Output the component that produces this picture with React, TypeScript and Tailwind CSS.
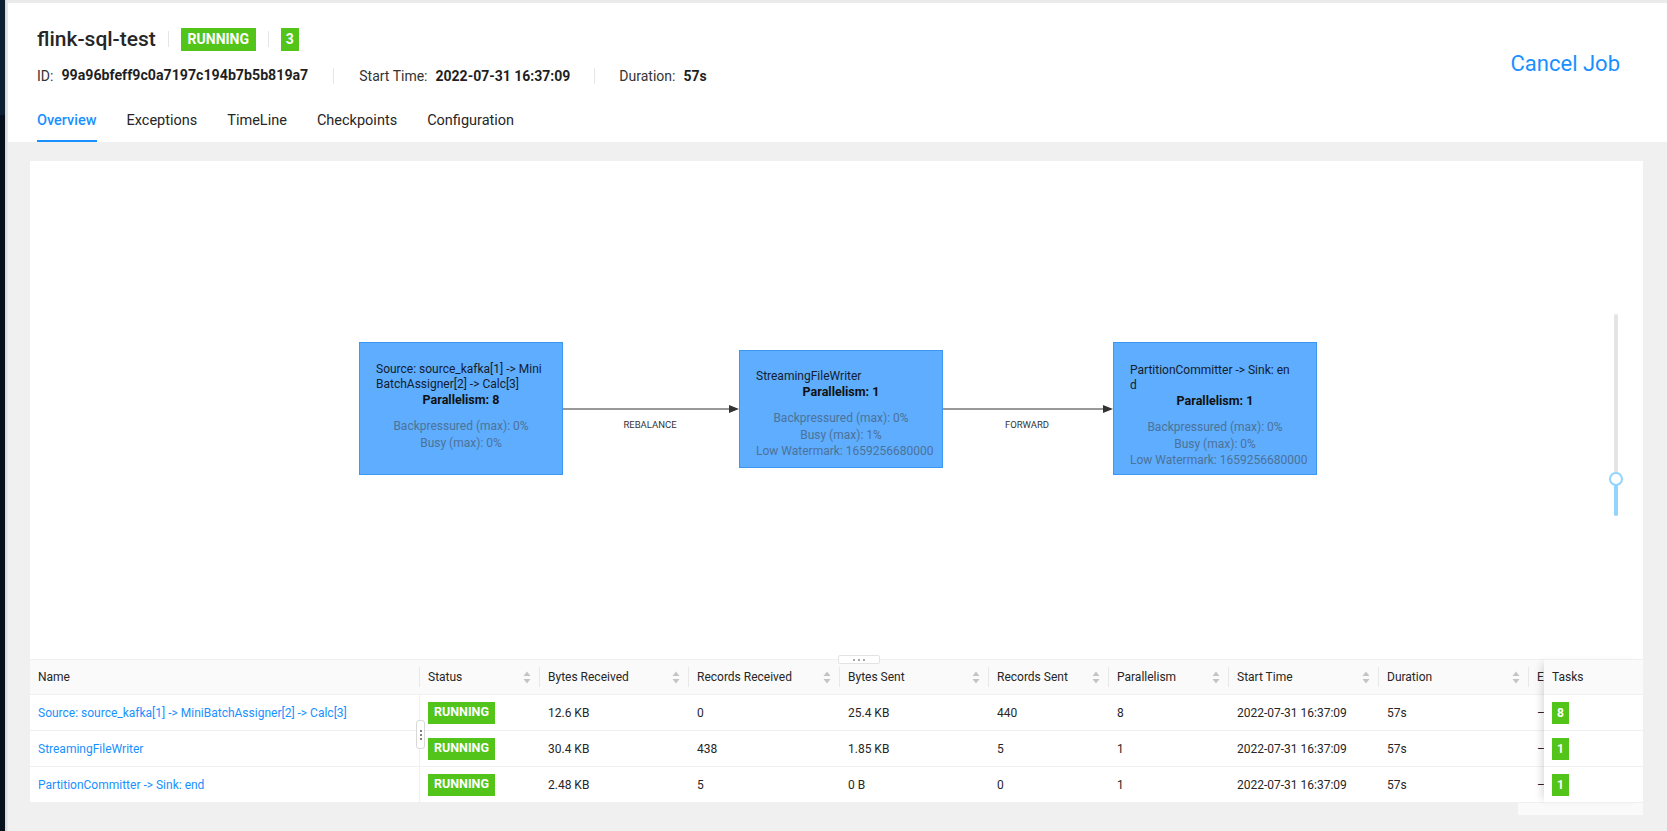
import type { ReactNode } from 'react'

const ROWS = [
  {
    name: 'Source: source_kafka[1] -> MiniBatchAssigner[2] -> Calc[3]',
    bytesIn: '12.6 KB',
    recIn: '0',
    bytesOut: '25.4 KB',
    recOut: '440',
    parallelism: '8',
    tasks: '8',
  },
  {
    name: 'StreamingFileWriter',
    bytesIn: '30.4 KB',
    recIn: '438',
    bytesOut: '1.85 KB',
    recOut: '5',
    parallelism: '1',
    tasks: '1',
  },
  {
    name: 'PartitionCommitter -> Sink: end',
    bytesIn: '2.48 KB',
    recIn: '5',
    bytesOut: '0 B',
    recOut: '0',
    parallelism: '1',
    tasks: '1',
  },
]

const HEADERS = [
  { label: 'Name', sort: false },
  { label: 'Status', sort: true },
  { label: 'Bytes Received', sort: true },
  { label: 'Records Received', sort: true },
  { label: 'Bytes Sent', sort: true },
  { label: 'Records Sent', sort: true },
  { label: 'Parallelism', sort: true },
  { label: 'Start Time', sort: true },
  { label: 'Duration', sort: true },
  { label: 'End Time', sort: true },
]

const GRID = 'grid grid-cols-[390px_120px_149px_151px_149px_120px_120px_150px_150px_150px]'

function SortIcon() {
  return (
    <svg width="8" height="13" viewBox="0 0 8 13" className="shrink-0">
      <path d="M4 0.5L7.5 5H0.5Z" fill="#c4c4c4" />
      <path d="M4 12.5L0.5 8H7.5Z" fill="#c4c4c4" />
    </svg>
  )
}

function Sep({ className = 'mx-[12px]' }: { className?: string }) {
  return <span className={`block h-[16px] w-px shrink-0 bg-[#e6e6e6] ${className}`} />
}

function GraphNode({
  left,
  top,
  height,
  pt,
  name,
  parallelism,
  details,
}: {
  left: string
  top: string
  height: string
  pt: string
  name: string[]
  parallelism: string
  details: string[]
}) {
  return (
    <div
      className={`absolute w-[204px] border border-[#3a97f2] bg-[#5eadfe] px-[16px] ${left} ${top} ${height} ${pt}`}
    >
      <div className="text-[12px] leading-[15px] text-[#14202e]">
        {name.map((l) => (
          <div key={l} className="whitespace-nowrap">
            {l}
          </div>
        ))}
      </div>
      <div className="text-center text-[12.5px] font-bold leading-[16px] text-[#111]">
        Parallelism: {parallelism}
      </div>
      <div className="mt-[10px] text-center text-[12px] leading-[16.5px] text-[#4d7299]">
        {details.map((d) => (
          <div key={d} className="whitespace-nowrap">
            {d}
          </div>
        ))}
      </div>
    </div>
  )
}

function Edge({ x1, x2, y, label, lx }: { x1: number; x2: number; y: number; label: string; lx: number }) {
  return (
    <g>
      <line x1={x1} y1={y} x2={x2 - 9} y2={y} stroke="#333" strokeWidth="1" />
      <path d={`M${x2} ${y}L${x2 - 10} ${y - 4}L${x2 - 10} ${y + 4}Z`} fill="#333" />
      <text
        x={lx}
        y={y + 19}
        textAnchor="middle"
        fontSize="9.5"
        fill="#333"
        style={{ fontFamily: 'Roboto, sans-serif' }}
      >
        {label}
      </text>
    </g>
  )
}

function Badge({ children, className }: { children: ReactNode; className: string }) {
  return (
    <span className={`flex items-center justify-center bg-[#52c41a] font-bold text-white ${className}`}>
      {children}
    </span>
  )
}

export default function App() {
  return (
    <div className="flex h-[831px] w-full overflow-hidden bg-[#f0f0f0] text-[#262626] [font-family:Roboto,'Liberation_Sans',sans-serif]">
      {/* side nav edge */}
      <div className="flex w-[5px] shrink-0 flex-col">
        <div className="h-[115px] bg-[#0d1f33]" />
        <div className="flex-1 bg-[#06111d]" />
      </div>
      <div className="w-[3px] shrink-0 bg-gradient-to-r from-[#d4d4d4] to-[#ececec]" />

      <div className="flex min-w-0 flex-1 flex-col">
        <div className="h-[3px] bg-[#ebebeb]" />

        {/* page header */}
        <header className="flex h-[139px] shrink-0 justify-between bg-white pl-[29px] pr-[47px]">
          <div className="flex flex-col pt-[22px]">
            <div className="flex h-[28px] items-center">
              <h1 className="text-[21px] font-medium leading-none text-[#262626]">flink-sql-test</h1>
              <Sep />
              <Badge className="h-[23px] w-[75px] text-[14px]">RUNNING</Badge>
              <Sep />
              <Badge className="h-[23px] w-[18px] text-[14px]">3</Badge>
            </div>
            <div className="mt-[13px] flex h-[20px] items-center text-[14px] text-[#333]">
              <span>ID:</span>
              <span className="ml-[8px] text-[14.2px] font-bold text-[#1f1f1f]">99a96bfeff9c0a7197c194b7b5b819a7</span>
              <Sep className="mx-[25px]" />
              <span>Start Time:</span>
              <span className="ml-[8px] font-bold text-[#1f1f1f]">2022-07-31 16:37:09</span>
              <Sep className="mx-[24px]" />
              <span>Duration:</span>
              <span className="ml-[8px] font-bold text-[#1f1f1f]">57s</span>
            </div>
            <nav className="mt-auto flex gap-[30px] text-[14.5px]">
              {['Overview', 'Exceptions', 'TimeLine', 'Checkpoints', 'Configuration'].map((t, i) => (
                <div
                  key={t}
                  className={`flex h-[39px] items-center border-b-2 pb-[2px] ${
                    i === 0 ? 'border-[#1890ff] font-medium text-[#1890ff]' : 'border-transparent text-[#262626]'
                  }`}
                >
                  {t}
                </div>
              ))}
            </nav>
          </div>
          <a className="mt-[47px] self-start text-[22px] leading-[28px] text-[#1890ff]">Cancel Job</a>
        </header>

        {/* content */}
        <div className="flex flex-1 flex-col pl-[22px] pr-[24px] pt-[19px]">
          <div className="relative bg-white">
            {/* job graph */}
            <div className="relative h-[498px]">
              <svg className="pointer-events-none absolute inset-0 h-full w-full">
                <Edge x1={533} x2={709} y={248} label="REBALANCE" lx={620} />
                <Edge x1={913} x2={1083} y={248} label="FORWARD" lx={997} />
              </svg>
              <GraphNode
                left="left-[329px]"
                top="top-[181px]"
                height="h-[133px]"
                pt="pt-[19px]"
                name={['Source: source_kafka[1] -> Mini', 'BatchAssigner[2] -> Calc[3]']}
                parallelism="8"
                details={['Backpressured (max): 0%', 'Busy (max): 0%']}
              />
              <GraphNode
                left="left-[709px]"
                top="top-[189px]"
                height="h-[118px]"
                pt="pt-[18px]"
                name={['StreamingFileWriter']}
                parallelism="1"
                details={['Backpressured (max): 0%', 'Busy (max): 1%', 'Low Watermark: 1659256680000']}
              />
              <GraphNode
                left="left-[1083px]"
                top="top-[181px]"
                height="h-[133px]"
                pt="pt-[20px]"
                name={['PartitionCommitter -> Sink: en', 'd']}
                parallelism="1"
                details={['Backpressured (max): 0%', 'Busy (max): 0%', 'Low Watermark: 1659256680000']}
              />

              {/* zoom slider */}
              <div className="absolute left-[1584px] top-[153px] h-[202px] w-[4px] rounded-full bg-[#e4e4e4]">
                <div className="absolute bottom-0 h-[37px] w-full rounded-full bg-[#91d5ff]" />
                <div className="absolute left-1/2 top-[158px] h-[14px] w-[14px] -translate-x-1/2 rounded-full border-2 border-[#91d5ff] bg-white" />
              </div>
            </div>

            {/* resize handle */}
            <div className="absolute left-[808px] top-[494px] z-10 flex h-[9px] w-[42px] items-center justify-center gap-[3px] rounded-[2px] border border-[#e3e3e3] bg-white">
              <span className="h-[2px] w-[2px] rounded-full bg-[#888]" />
              <span className="h-[2px] w-[2px] rounded-full bg-[#888]" />
              <span className="h-[2px] w-[2px] rounded-full bg-[#888]" />
            </div>

            {/* vertex table */}
            <div className="relative flex text-[12px]">
              <div className="min-w-0 flex-1 overflow-hidden">
                <div className={`${GRID} h-[36px] border-y border-[#f0f0f0] bg-[#fafafa]`}>
                  {HEADERS.map((h) => (
                    <div
                      key={h.label}
                      className="relative flex items-center justify-between overflow-hidden pl-[8px] pr-[9px]"
                    >
                      <span className="whitespace-nowrap text-[#262626]">{h.label}</span>
                      {h.sort && <SortIcon />}
                      <span className="absolute right-0 top-1/2 h-[20px] w-px -translate-y-1/2 bg-[#e8e8e8]" />
                    </div>
                  ))}
                </div>
                {ROWS.map((r) => (
                  <div key={r.name} className={`${GRID} h-[36px] border-b border-[#f0f0f0]`}>
                    <div className="flex items-center border-r border-[#f0f0f0] pl-[8px] text-[#1890ff]">{r.name}</div>
                    <div className="flex items-center pl-[8px]">
                      <Badge className="h-[22px] w-[67px] text-[12.5px]">RUNNING</Badge>
                    </div>
                    <div className="flex items-center pl-[8px]">{r.bytesIn}</div>
                    <div className="flex items-center pl-[8px]">{r.recIn}</div>
                    <div className="flex items-center pl-[8px]">{r.bytesOut}</div>
                    <div className="flex items-center pl-[8px]">{r.recOut}</div>
                    <div className="flex items-center pl-[8px]">{r.parallelism}</div>
                    <div className="flex items-center pl-[8px]">2022-07-31 16:37:09</div>
                    <div className="flex items-center pl-[8px]">57s</div>
                    <div className="flex items-center pl-[8px]">–</div>
                  </div>
                ))}
              </div>

              {/* fixed tasks column */}
              <div className="relative z-10 w-[99px] shrink-0 bg-white shadow-[-6px_0_8px_-4px_rgba(0,0,0,0.15)]">
                <div className="flex h-[36px] items-center border-y border-[#f0f0f0] bg-[#fafafa] pl-[8px]">Tasks</div>
                {ROWS.map((r) => (
                  <div key={r.name} className="flex h-[36px] items-center border-b border-[#f0f0f0] pl-[8px]">
                    <Badge className="h-[22px] w-[17px] text-[12px]">{r.tasks}</Badge>
                  </div>
                ))}
              </div>

              {/* column resize handle */}
              <div className="absolute left-[386px] top-[61px] flex h-[29px] w-[9px] flex-col items-center justify-center gap-[2px] rounded-[3px] border border-[#d9d9d9] bg-white">
                <span className="h-[2px] w-[2px] rounded-full bg-[#555]" />
                <span className="h-[2px] w-[2px] rounded-full bg-[#555]" />
                <span className="h-[2px] w-[2px] rounded-full bg-[#555]" />
              </div>
            </div>
          </div>
          <div className="ml-auto h-[12px] w-[125px] bg-[#fafafa]" />
        </div>
      </div>
    </div>
  )
}
